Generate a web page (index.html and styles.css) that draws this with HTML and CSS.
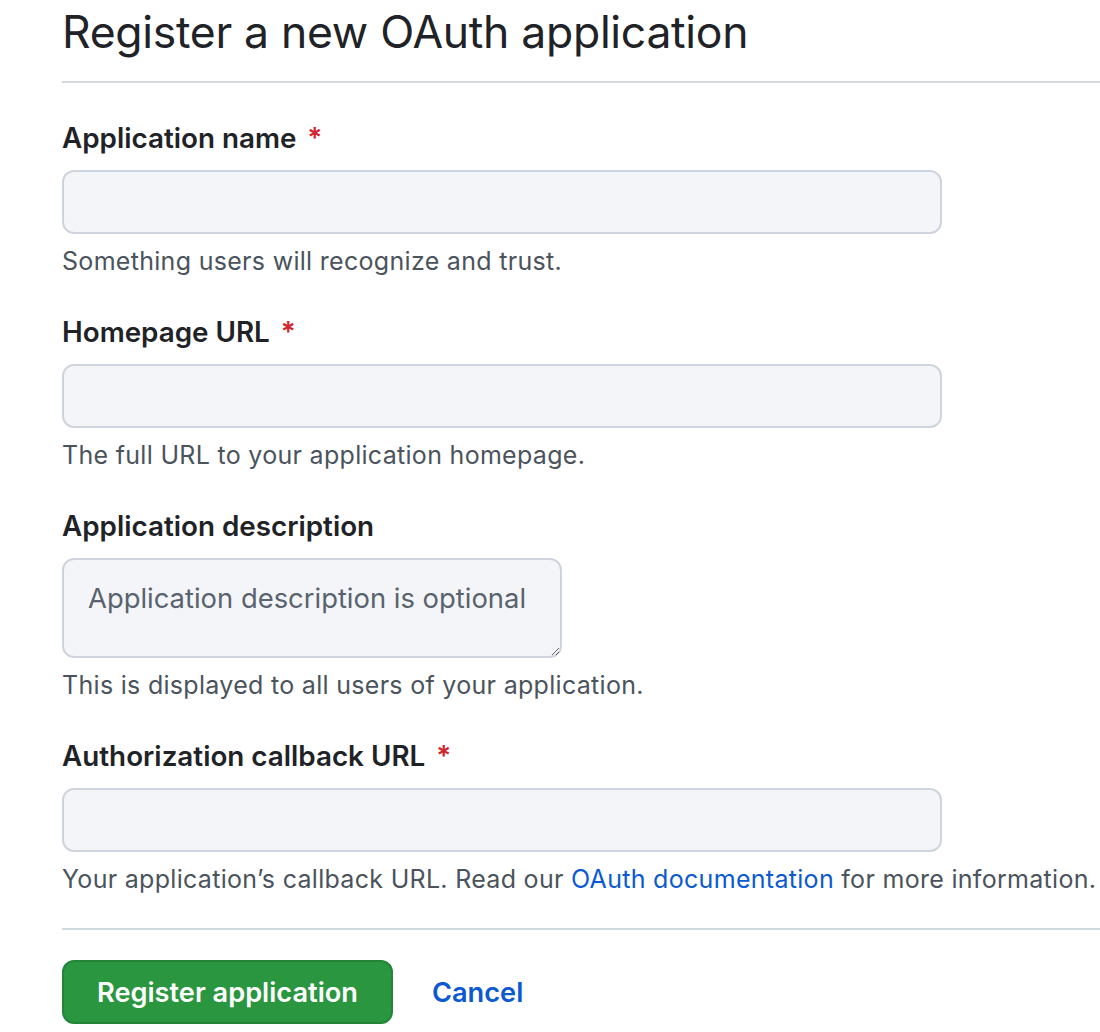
FILE: index.html
```html
<!DOCTYPE html>
<html lang="en">
<head>
<meta charset="utf-8">
<title>Register a new OAuth application</title>
<link rel="stylesheet" href="styles.css">
</head>
<body>
<div class="page">
  <div class="subhead">
    <h1 class="subhead-heading">Register a new OAuth application</h1>
  </div>
  <form class="form">
    <div class="form-group">
      <label class="label" for="name">Application name <span class="req">*</span></label>
      <input class="input" id="name" type="text">
      <p class="note">Something users will recognize and trust.</p>
    </div>
    <div class="form-group">
      <label class="label" for="url">Homepage URL <span class="req">*</span></label>
      <input class="input" id="url" type="text">
      <p class="note">The full URL to your application homepage.</p>
    </div>
    <div class="form-group">
      <label class="label" for="desc">Application description</label>
      <textarea class="textarea" id="desc" placeholder="Application description is optional"></textarea>
      <p class="note">This is displayed to all users of your application.</p>
    </div>
    <div class="form-group">
      <label class="label" for="cb">Authorization callback URL <span class="req">*</span></label>
      <input class="input" id="cb" type="text">
      <p class="note">Your application’s callback URL. Read our <a class="link" href="#">OAuth documentation</a> for more information.</p>
    </div>
    <div class="actions">
      <button class="btn-primary" type="button">Register application</button>
      <a class="cancel" href="#">Cancel</a>
    </div>
  </form>
</div>
</body>
</html>
```

FILE: styles.css
```css
html, body {
  margin: 0;
  padding: 0;
  background: #ffffff;
}
body {
  font-family: Inter, "Noto Sans", "Liberation Sans", sans-serif;
  color: #1f2328;
  overflow-x: hidden;
}
.page {
  margin-left: 62px;
}
.subhead {
  border-bottom: 2px solid #d1d9e0;
  padding-bottom: 17px;
}
.subhead-heading {
  margin: 0;
  font-size: 44.5px;
  line-height: 64px;
  font-weight: 400;
  letter-spacing: -0.3px;
}
.form {
  display: flex;
  flex-direction: column;
}
.form-group {
  display: flex;
  flex-direction: column;
  align-items: flex-start;
  margin-top: 35px;
}
.form-group + .form-group {
  margin-top: 33px;
}
.label {
  font-size: 27.8px;
  line-height: 40px;
  font-weight: 600;
  margin-bottom: 12px;
}
.req {
  color: #d1242f;
  margin-left: 4px;
}
.input {
  box-sizing: border-box;
  width: 880px;
  height: 64px;
  border: 2px solid #cdd4dd;
  border-radius: 12px;
  background: #f4f5f9;
  margin: 0;
  padding: 0 24px;
  font: inherit;
  font-size: 27px;
}
.textarea {
  box-sizing: border-box;
  width: 500px;
  height: 100px;
  border: 2px solid #cdd4dd;
  border-radius: 12px;
  background: #f4f5f9;
  margin: 0;
  padding: 18px 24px;
  font-family: inherit;
  font-size: 27.4px;
  line-height: 40px;
  resize: vertical;
  overflow: hidden;
}
.textarea::placeholder {
  color: #59636e;
}
.note {
  margin: 9px 0 0;
  font-size: 25px;
  line-height: 36px;
  letter-spacing: 0.3px;
  white-space: nowrap;
  color: #4b535d;
}
.link {
  color: #0b5ad1;
  text-decoration: none;
}
.actions {
  margin-top: 31px;
  border-top: 2px solid #d1d9e0;
  padding-top: 30px;
  display: flex;
  align-items: center;
  gap: 39px;
}
.btn-primary {
  box-sizing: border-box;
  height: 64px;
  padding: 0 33px;
  border: 2px solid #23843a;
  border-radius: 12px;
  background: #2a963f;
  color: #ffffff;
  font-family: inherit;
  font-size: 27.2px;
  font-weight: 600;
}
.cancel {
  color: #0b5ad1;
  font-size: 27.2px;
  font-weight: 600;
  text-decoration: none;
}
```
